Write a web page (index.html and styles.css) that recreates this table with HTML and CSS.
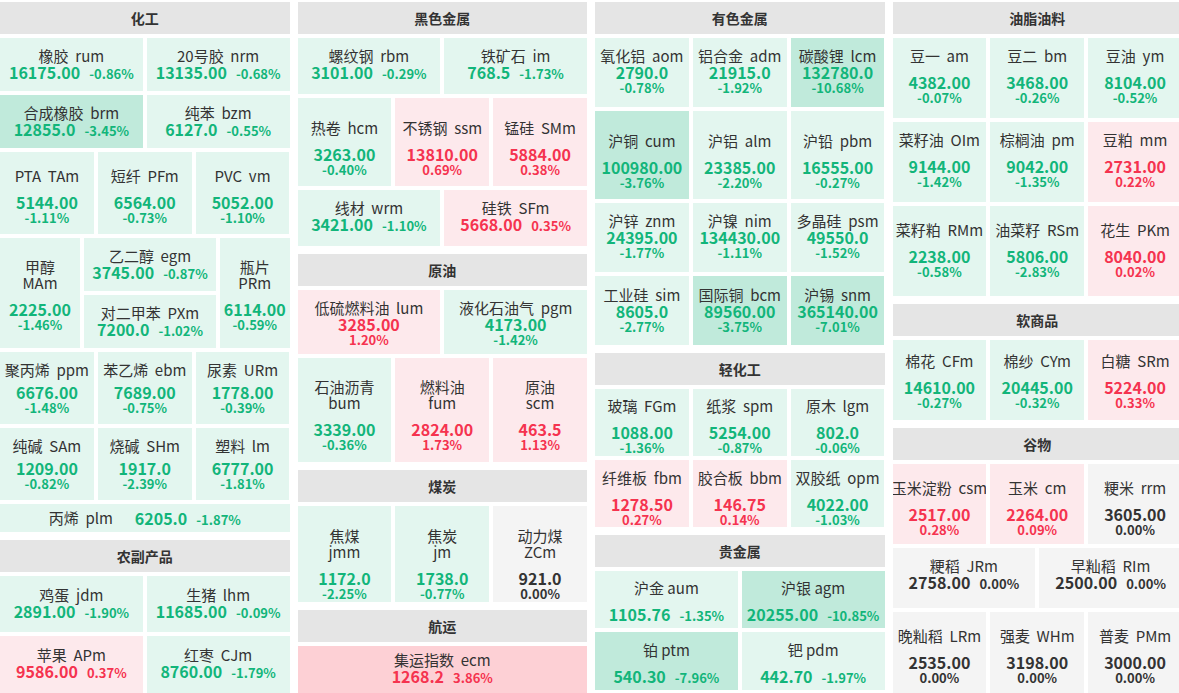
FILE: index.html
```html
<!DOCTYPE html>
<html lang="zh-CN">
<head>
<meta charset="utf-8">
<title>期货行情</title>
<link rel="stylesheet" href="styles.css">
</head>
<body>
<div class="board">
  <!-- Column 1 -->
  <div class="col">
    <div class="sec">
      <div class="hd">化工</div>
      <div class="row h53">
        <div class="c dn a"><div class="n">橡胶&nbsp;&nbsp;rum</div><div class="v"><b>16175.00</b><i>-0.86%</i></div></div>
        <div class="c dn a"><div class="n">20号胶&nbsp;&nbsp;nrm</div><div class="v"><b>13135.00</b><i>-0.68%</i></div></div>
      </div>
      <div class="row h53">
        <div class="c dn2 a"><div class="n">合成橡胶&nbsp;&nbsp;brm</div><div class="v"><b>12855.0</b><i>-3.45%</i></div></div>
        <div class="c dn a"><div class="n">纯苯&nbsp;&nbsp;bzm</div><div class="v"><b>6127.0</b><i>-0.55%</i></div></div>
      </div>
      <div class="row h82 p5">
        <div class="c dn s g10"><div class="n">PTA&nbsp;&nbsp;TAm</div><div class="v"><b>5144.00</b><i>-1.11%</i></div></div>
        <div class="c dn s g10"><div class="n">短纤&nbsp;&nbsp;PFm</div><div class="v"><b>6564.00</b><i>-0.73%</i></div></div>
        <div class="c dn s g10"><div class="n">PVC&nbsp;&nbsp;vm</div><div class="v"><b>5052.00</b><i>-1.10%</i></div></div>
      </div>
      <div class="row h110">
        <div class="c dn s g10 w80 p4"><div class="n">甲醇<br>MAm</div><div class="v"><b>2225.00</b><i>-1.46%</i></div></div>
        <div class="sub w132">
          <div class="c dn a"><div class="n">乙二醇&nbsp;&nbsp;egm</div><div class="v"><b>3745.00</b><i>-0.87%</i></div></div>
          <div class="c dn a"><div class="n">对二甲苯&nbsp;&nbsp;PXm</div><div class="v"><b>7200.0</b><i>-1.02%</i></div></div>
        </div>
        <div class="c dn s g10 p4"><div class="n">瓶片<br>PRm</div><div class="v"><b>6114.00</b><i>-0.59%</i></div></div>
      </div>
      <div class="row h72">
        <div class="c dn s g6"><div class="n">聚丙烯&nbsp;&nbsp;ppm</div><div class="v"><b>6676.00</b><i>-1.48%</i></div></div>
        <div class="c dn s g6"><div class="n">苯乙烯&nbsp;&nbsp;ebm</div><div class="v"><b>7689.00</b><i>-0.75%</i></div></div>
        <div class="c dn s g6"><div class="n">尿素&nbsp;&nbsp;URm</div><div class="v"><b>1778.00</b><i>-0.39%</i></div></div>
      </div>
      <div class="row h72">
        <div class="c dn s g6"><div class="n">纯碱&nbsp;&nbsp;SAm</div><div class="v"><b>1209.00</b><i>-0.82%</i></div></div>
        <div class="c dn s g6"><div class="n">烧碱&nbsp;&nbsp;SHm</div><div class="v"><b>1917.0</b><i>-2.39%</i></div></div>
        <div class="c dn s g6"><div class="n">塑料&nbsp;&nbsp;lm</div><div class="v"><b>6777.00</b><i>-1.81%</i></div></div>
      </div>
      <div class="row h28">
        <div class="c dn line"><div class="n">丙烯&nbsp;&nbsp;plm</div><div class="v"><b>6205.0</b><i>-1.87%</i></div></div>
      </div>
    </div>
    <div class="sec">
      <div class="hd">农副产品</div>
      <div class="row h56 q2">
        <div class="c dn a"><div class="n">鸡蛋&nbsp;&nbsp;jdm</div><div class="v"><b>2891.00</b><i>-1.90%</i></div></div>
        <div class="c dn a"><div class="n">生猪&nbsp;&nbsp;lhm</div><div class="v"><b>11685.00</b><i>-0.09%</i></div></div>
      </div>
      <div class="row h57 q3">
        <div class="c up a"><div class="n">苹果&nbsp;&nbsp;APm</div><div class="v"><b>9586.00</b><i>0.37%</i></div></div>
        <div class="c dn a"><div class="n">红枣&nbsp;&nbsp;CJm</div><div class="v"><b>8760.00</b><i>-1.79%</i></div></div>
      </div>
    </div>
  </div>

  <!-- Column 2 -->
  <div class="col">
    <div class="sec">
      <div class="hd">黑色金属</div>
      <div class="row h56 q3">
        <div class="c dn a"><div class="n">螺纹钢&nbsp;&nbsp;rbm</div><div class="v"><b>3101.00</b><i>-0.29%</i></div></div>
        <div class="c dn a"><div class="n">铁矿石&nbsp;&nbsp;im</div><div class="v"><b>768.5</b><i>-1.73%</i></div></div>
      </div>
      <div class="row h88 p11">
        <div class="c dn s g10"><div class="n">热卷&nbsp;&nbsp;hcm</div><div class="v"><b>3263.00</b><i>-0.40%</i></div></div>
        <div class="c up s g10"><div class="n">不锈钢&nbsp;&nbsp;ssm</div><div class="v"><b>13810.00</b><i>0.69%</i></div></div>
        <div class="c up s g10"><div class="n">锰硅&nbsp;&nbsp;SMm</div><div class="v"><b>5884.00</b><i>0.38%</i></div></div>
      </div>
      <div class="row h56 q4">
        <div class="c dn a"><div class="n">线材&nbsp;&nbsp;wrm</div><div class="v"><b>3421.00</b><i>-1.10%</i></div></div>
        <div class="c up a"><div class="n">硅铁&nbsp;&nbsp;SFm</div><div class="v"><b>5668.00</b><i>0.35%</i></div></div>
      </div>
    </div>
    <div class="sec">
      <div class="hd">原油</div>
      <div class="row h64 p2">
        <div class="c up s"><div class="n">低硫燃料油&nbsp;&nbsp;lum</div><div class="v"><b>3285.00</b><i>1.20%</i></div></div>
        <div class="c dn s"><div class="n">液化石油气&nbsp;&nbsp;pgm</div><div class="v"><b>4173.00</b><i>-1.42%</i></div></div>
      </div>
      <div class="row h104 p10">
        <div class="c dn s g10"><div class="n">石油沥青<br>bum</div><div class="v"><b>3339.00</b><i>-0.36%</i></div></div>
        <div class="c up s g10"><div class="n">燃料油<br>fum</div><div class="v"><b>2824.00</b><i>1.73%</i></div></div>
        <div class="c up s g10"><div class="n">原油<br>scm</div><div class="v"><b>463.5</b><i>1.13%</i></div></div>
      </div>
    </div>
    <div class="sec">
      <div class="hd">煤炭</div>
      <div class="row h96 p19">
        <div class="c dn s g10"><div class="n">焦煤<br>jmm</div><div class="v"><b>1172.0</b><i>-2.25%</i></div></div>
        <div class="c dn s g10"><div class="n">焦炭<br>jm</div><div class="v"><b>1738.0</b><i>-0.77%</i></div></div>
        <div class="c zr s g10"><div class="n">动力煤<br>ZCm</div><div class="v"><b>921.0</b><i>0.00%</i></div></div>
      </div>
    </div>
    <div class="sec">
      <div class="hd">航运</div>
      <div class="row h47 q3">
        <div class="c up2 a"><div class="n">集运指数&nbsp;&nbsp;ecm</div><div class="v"><b>1268.2</b><i>3.86%</i></div></div>
      </div>
    </div>
  </div>

  <!-- Column 3 -->
  <div class="col">
    <div class="sec">
      <div class="hd">有色金属</div>
      <div class="row h69 q3">
        <div class="c dn s"><div class="n">氧化铝&nbsp;&nbsp;aom</div><div class="v"><b>2790.0</b><i>-0.78%</i></div></div>
        <div class="c dn s"><div class="n">铝合金&nbsp;&nbsp;adm</div><div class="v"><b>21915.0</b><i>-1.92%</i></div></div>
        <div class="c dn2 s"><div class="n">碳酸锂&nbsp;&nbsp;lcm</div><div class="v"><b>132780.0</b><i>-10.68%</i></div></div>
      </div>
      <div class="row h88 p12">
        <div class="c dn2 s g10"><div class="n">沪铜&nbsp;&nbsp;cum</div><div class="v"><b>100980.00</b><i>-3.76%</i></div></div>
        <div class="c dn s g10"><div class="n">沪铝&nbsp;&nbsp;alm</div><div class="v"><b>23385.00</b><i>-2.20%</i></div></div>
        <div class="c dn s g10"><div class="n">沪铅&nbsp;&nbsp;pbm</div><div class="v"><b>16555.00</b><i>-0.27%</i></div></div>
      </div>
      <div class="row h69 q3">
        <div class="c dn s"><div class="n">沪锌&nbsp;&nbsp;znm</div><div class="v"><b>24395.00</b><i>-1.77%</i></div></div>
        <div class="c dn s"><div class="n">沪镍&nbsp;&nbsp;nim</div><div class="v"><b>134430.00</b><i>-1.11%</i></div></div>
        <div class="c dn s"><div class="n">多晶硅&nbsp;&nbsp;psm</div><div class="v"><b>49550.0</b><i>-1.52%</i></div></div>
      </div>
      <div class="row h69 q2">
        <div class="c dn s"><div class="n">工业硅&nbsp;&nbsp;sim</div><div class="v"><b>8605.0</b><i>-2.77%</i></div></div>
        <div class="c dn2 s"><div class="n">国际铜&nbsp;&nbsp;bcm</div><div class="v"><b>89560.00</b><i>-3.75%</i></div></div>
        <div class="c dn2 s"><div class="n">沪锡&nbsp;&nbsp;snm</div><div class="v"><b>365140.00</b><i>-7.01%</i></div></div>
      </div>
    </div>
    <div class="sec">
      <div class="hd">轻化工</div>
      <div class="row h67 p7">
        <div class="c dn s g10"><div class="n">玻璃&nbsp;&nbsp;FGm</div><div class="v"><b>1088.00</b><i>-1.36%</i></div></div>
        <div class="c dn s g10"><div class="n">纸浆&nbsp;&nbsp;spm</div><div class="v"><b>5254.00</b><i>-0.87%</i></div></div>
        <div class="c dn s g10"><div class="n">原木&nbsp;&nbsp;lgm</div><div class="v"><b>802.0</b><i>-0.06%</i></div></div>
      </div>
      <div class="row h67 p8">
        <div class="c up s g10"><div class="n">纤维板&nbsp;&nbsp;fbm</div><div class="v"><b>1278.50</b><i>0.27%</i></div></div>
        <div class="c up s g10"><div class="n">胶合板&nbsp;&nbsp;bbm</div><div class="v"><b>146.75</b><i>0.14%</i></div></div>
        <div class="c dn s g10"><div class="n">双胶纸&nbsp;&nbsp;opm</div><div class="v"><b>4022.00</b><i>-1.03%</i></div></div>
      </div>
    </div>
    <div class="sec">
      <div class="hd">贵金属</div>
      <div class="row h57 p4">
        <div class="c dn a g10"><div class="n">沪金 aum</div><div class="v"><b>1105.76</b><i>-1.35%</i></div></div>
        <div class="c dn2 a g10"><div class="n">沪银 agm</div><div class="v"><b>20255.00</b><i>-10.85%</i></div></div>
      </div>
      <div class="row h58 p4">
        <div class="c dn2 a g10"><div class="n">铂 ptm</div><div class="v"><b>540.30</b><i>-7.96%</i></div></div>
        <div class="c dn a g10"><div class="n">钯 pdm</div><div class="v"><b>442.70</b><i>-1.97%</i></div></div>
      </div>
    </div>
  </div>

  <!-- Column 4 -->
  <div class="col">
    <div class="sec">
      <div class="hd">油脂油料</div>
      <div class="row h80 q4">
        <div class="c dn s g10"><div class="n">豆一&nbsp;&nbsp;am</div><div class="v"><b>4382.00</b><i>-0.07%</i></div></div>
        <div class="c dn s g10"><div class="n">豆二&nbsp;&nbsp;bm</div><div class="v"><b>3468.00</b><i>-0.26%</i></div></div>
        <div class="c dn s g10"><div class="n">豆油&nbsp;&nbsp;ym</div><div class="v"><b>8104.00</b><i>-0.52%</i></div></div>
      </div>
      <div class="row h80 q5">
        <div class="c dn s g10"><div class="n">菜籽油&nbsp;&nbsp;OIm</div><div class="v"><b>9144.00</b><i>-1.42%</i></div></div>
        <div class="c dn s g10"><div class="n">棕榈油&nbsp;&nbsp;pm</div><div class="v"><b>9042.00</b><i>-1.35%</i></div></div>
        <div class="c up s g10"><div class="n">豆粕&nbsp;&nbsp;mm</div><div class="v"><b>2731.00</b><i>0.22%</i></div></div>
      </div>
      <div class="row h90 q3">
        <div class="c dn s g10"><div class="n">菜籽粕&nbsp;&nbsp;RMm</div><div class="v"><b>2238.00</b><i>-0.58%</i></div></div>
        <div class="c dn s g10"><div class="n">油菜籽&nbsp;&nbsp;RSm</div><div class="v"><b>5806.00</b><i>-2.83%</i></div></div>
        <div class="c up s g10"><div class="n">花生&nbsp;&nbsp;PKm</div><div class="v"><b>8040.00</b><i>0.02%</i></div></div>
      </div>
    </div>
    <div class="sec">
      <div class="hd">软商品</div>
      <div class="row h80 p2">
        <div class="c dn s g10"><div class="n">棉花&nbsp;&nbsp;CFm</div><div class="v"><b>14610.00</b><i>-0.27%</i></div></div>
        <div class="c dn s g10"><div class="n">棉纱&nbsp;&nbsp;CYm</div><div class="v"><b>20445.00</b><i>-0.32%</i></div></div>
        <div class="c up s g10"><div class="n">白糖&nbsp;&nbsp;SRm</div><div class="v"><b>5224.00</b><i>0.33%</i></div></div>
      </div>
    </div>
    <div class="sec">
      <div class="hd">谷物</div>
      <div class="row h80 p7">
        <div class="c up s g10"><div class="n">玉米淀粉&nbsp;&nbsp;csm</div><div class="v"><b>2517.00</b><i>0.28%</i></div></div>
        <div class="c up s g10"><div class="n">玉米&nbsp;&nbsp;cm</div><div class="v"><b>2264.00</b><i>0.09%</i></div></div>
        <div class="c zr s g10"><div class="n">粳米&nbsp;&nbsp;rrm</div><div class="v"><b>3605.00</b><i>0.00%</i></div></div>
      </div>
      <div class="row h60 q7">
        <div class="c zr a"><div class="n">粳稻&nbsp;&nbsp;JRm</div><div class="v"><b>2758.00</b><i>0.00%</i></div></div>
        <div class="c zr a"><div class="n">早籼稻&nbsp;&nbsp;RIm</div><div class="v"><b>2500.00</b><i>0.00%</i></div></div>
      </div>
      <div class="row h81 p7">
        <div class="c zr s g10"><div class="n">晚籼稻&nbsp;&nbsp;LRm</div><div class="v"><b>2535.00</b><i>0.00%</i></div></div>
        <div class="c zr s g10"><div class="n">强麦&nbsp;&nbsp;WHm</div><div class="v"><b>3198.00</b><i>0.00%</i></div></div>
        <div class="c zr s g10"><div class="n">普麦&nbsp;&nbsp;PMm</div><div class="v"><b>3000.00</b><i>0.00%</i></div></div>
      </div>
    </div>
  </div>
</div>
</body>
</html>
```

FILE: styles.css
```css
html, body {
  margin: 0;
  padding: 0;
  background: #ffffff;
  overflow: hidden;
}

body {
  font-family: "Noto Sans CJK SC", sans-serif;
  color: #333333;
  width: 1179px;
  height: 693px;
}

.board {
  display: grid;
  grid-template-columns: repeat(4, 289.5px);
  column-gap: 8px;
  padding-top: 2px;
  align-items: start;
}

.col {
  display: flex;
  flex-direction: column;
  min-width: 0;
}

.sec {
  display: flex;
  flex-direction: column;
  gap: 4px;
}

.sec + .sec {
  margin-top: 8px;
}

.hd {
  height: 32px;
  background: #e5e5e5;
  display: flex;
  align-items: center;
  justify-content: center;
  font-size: 14px;
  font-weight: bold;
  color: #333333;
}

.row {
  display: flex;
  gap: 4px;
}

.row > .c {
  flex: 1 1 0;
  min-width: 0;
}

.row > .w80 { flex: 0 0 80px; }
.row > .w132 { flex: 0 0 132px; }

.sub {
  display: flex;
  flex-direction: column;
  gap: 4px;
}

.sub > .c {
  flex: 1 1 0;
}

.h28 { height: 28px; }
.h47 { height: 47px; }
.h53 { height: 53px; }
.h56 { height: 56px; }
.h57 { height: 57px; }
.h58 { height: 58px; }
.h60 { height: 60px; }
.h64 { height: 64px; }
.h67 { height: 67px; }
.h69 { height: 69px; }
.h72 { height: 72px; }
.h80 { height: 80px; }
.h81 { height: 81px; }
.h82 { height: 82px; }
.h88 { height: 88px; }
.h90 { height: 90px; }
.h96 { height: 96px; }
.h104 { height: 104px; }
.h110 { height: 110px; }

/* vertical nudges of the centred content */
.p2 > .c, .c.p2 { padding-top: 2px; }
.p4 > .c, .c.p4 { padding-top: 4px; }
.p5 > .c, .c.p5 { padding-top: 5px; }
.p7 > .c { padding-top: 7px; }
.p8 > .c { padding-top: 8px; }
.p10 > .c { padding-top: 10px; }
.p11 > .c { padding-top: 11px; }
.p12 > .c { padding-top: 12px; }
.p19 > .c { padding-top: 19px; }
.q2 > .c { padding-bottom: 2px; }
.q3 > .c { padding-bottom: 3px; }
.q4 > .c { padding-bottom: 4px; }
.q5 > .c { padding-bottom: 5px; }
.q7 > .c { padding-bottom: 7px; }

.c {
  display: flex;
  flex-direction: column;
  align-items: center;
  justify-content: center;
  text-align: center;
  overflow: hidden;
  box-sizing: border-box;
}

.n {
  font-size: 15px;
  line-height: 16px;
  white-space: nowrap;
  color: #333333;
}

.s .n br + * { display: inline; }

.v {
  margin-top: 0;
  white-space: nowrap;
}

.g6 .v { margin-top: 6px; }
.g10 .v { margin-top: 10px; }

.v b {
  font-size: 16px;
  line-height: 17px;
  font-weight: bold;
}

.v i {
  font-style: normal;
  font-size: 13px;
  line-height: 13px;
  font-weight: bold;
}

.s .v b,
.s .v i {
  display: block;
}

.a .v,
.line .v {
  display: flex;
  align-items: baseline;
  justify-content: center;
}

.a .v i,
.line .v i {
  margin-left: 9px;
}

.line {
  flex-direction: row;
  align-items: center;
}

.line .v {
  margin-top: 0;
  margin-left: 22px;
}

/* backgrounds */
.dn { background: #e3f6ef; }
.dn2 { background: #c0eadb; }
.up { background: #fde9ec; }
.up2 { background: #fdd0d5; }
.zr { background: #f4f4f4; }

/* value colours */
.dn .v, .dn2 .v { color: #12b57a; }
.up .v, .up2 .v { color: #f5334f; }
.zr .v { color: #333333; }
```
